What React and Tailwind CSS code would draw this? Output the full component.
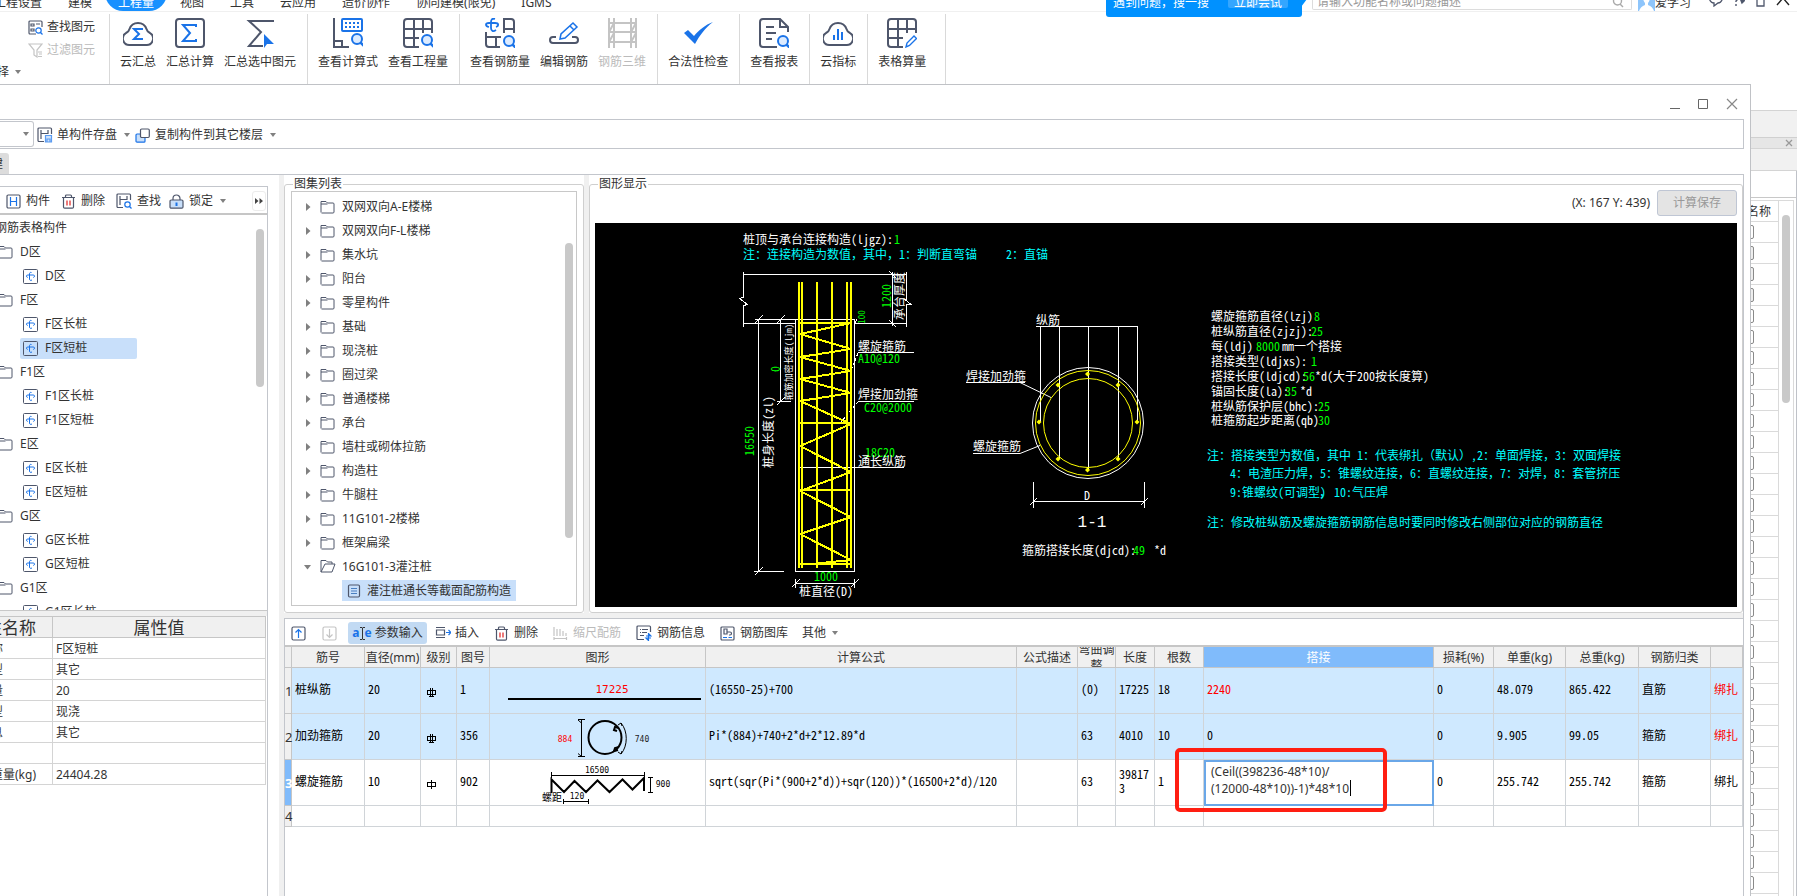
import React from "react";

const INK = "#4e566b";
const BLUE = "#1a73e8";

/* ---------- shared helpers ---------- */

function Icon({ size = 16, children, className = "" }) {
  return (
    <svg
      width={size}
      height={size}
      viewBox={`0 0 ${size} ${size}`}
      fill="none"
      stroke={INK}
      strokeWidth={size > 20 ? 2 : 1.2}
      aria-hidden="true"
      className={"shrink-0 " + className}
    >
      {children}
    </svg>
  );
}

function Caret({ className = "" }) {
  return (
    <svg width="6" height="4" viewBox="0 0 6 4" aria-hidden="true" className={"shrink-0 " + className}>
      <path d="M0 0h6L3 4z" fill="#808080" />
    </svg>
  );
}

/* ---------- title tabs ---------- */

const menuTabs = ["工程设置", "建模", "工程量", "视图", "工具", "云应用", "造价协作", "协同建模(限免)", "IGMS"];

function MenuBar() {
  return (
    <header className="relative z-10 flex h-3 shrink-0 items-end border-b border-[#f0f0f0] bg-white">
      <nav className="-ml-[19px] flex">
        {menuTabs.map((t) => (
          <button
            key={t}
            className={
              "h-[18px] whitespace-nowrap px-[13px] leading-5 " +
              (t === "工程量" ? "rounded-b-full rounded-t-none bg-[#1890ff] text-white" : "")
            }
          >
            {t}
          </button>
        ))}
      </nav>
      <div className="ml-auto flex items-end">
        <div className="relative mr-2.5 h-3 w-[196px]">
          <div className="absolute bottom-[-6px] left-0 flex h-[26px] w-full items-start rounded-b-[3px] bg-[#0091ff] pl-[7px] pr-3.5 text-white">
            <span className="pt-0.5 leading-5">遇到问题，搜一搜</span>
            <button className="ml-auto h-[17px] rounded-[2px] bg-[#34a6ff] px-1.5 leading-6">立即尝试</button>
            <svg width="6" height="16" viewBox="0 0 6 16" className="absolute -right-[5px] top-0" aria-hidden="true">
              <path d="M0 0h6v8L0 16z" fill="#0091ff" />
            </svg>
          </div>
        </div>
        <label className="relative mb-px block w-[320px]">
          <input
            aria-label="搜索"
            placeholder="请输入功能名称或问题描述"
            className="block h-[18px] w-full rounded-b-[2px] border border-t-0 border-[#dcdcdc] px-1 pt-0.5 leading-4 outline-none placeholder:text-[#999]"
          />
          <svg width="12" height="12" viewBox="0 0 12 12" className="absolute bottom-0.5 right-2" fill="none" stroke="#aaa" strokeWidth="1.4" aria-hidden="true">
            <circle cx="5.5" cy="5" r="4" />
            <path d="M8 8l3 3" />
          </svg>
        </label>
        <svg width="17" height="14" viewBox="0 0 17 14" className="ml-1.5" aria-hidden="true">
          <path d="M0 0h17v14H0z" fill="#8ec5fb" />
          <path d="M5 0h7c0 3-1 5-2 6v2c3 1 5 3 6 6H1c1-3 3-5 6-6V6C6 5 5 3 5 0z" fill="#fff" />
        </svg>
        <span className="h-[18px] leading-5">爱学习</span>
        <div className="mb-1 ml-4 mr-[7px] flex items-end gap-[9px]">
          <svg width="17" height="15" viewBox="0 0 17 15" fill="none" stroke={INK} strokeWidth="1.3" aria-hidden="true">
            <path d="M2 0c-1 6 1 11 5 11v3l4-3c3 0 5-4 5-10M6 5v1M8.500 5v1M11 5v1" />
          </svg>
          <svg width="12" height="15" viewBox="0 0 12 15" fill="none" stroke={INK} strokeWidth="1.4" aria-hidden="true">
            <path d="M2 4c1-3 5-3 5 1l-4 4v1M3 12v2" />
            <path d="M7 6l5 2-3 3z" fill={INK} />
          </svg>
          <svg width="13" height="15" viewBox="0 0 13 15" fill="none" stroke={INK} strokeWidth="1.3" aria-hidden="true">
            <path d="M0 7h3v7h7V7h3L8 3H5z" />
          </svg>
          <svg width="14" height="15" viewBox="0 0 14 15" fill="none" stroke="#222" strokeWidth="1.4" aria-hidden="true">
            <path d="M1 13l6-7 6 7" />
          </svg>
        </div>
      </div>
    </header>
  );
}

/* ---------- ribbon ---------- */

const magnifier = (x, y) => (
  <g stroke={BLUE}>
    <circle cx={x} cy={y} r="5" fill="#dcebff" />
    <path d={`M${x + 3.500} ${y + 3.500}L${x + 7} ${y + 7}`} strokeWidth="2.500" />
  </g>
);

const ribbonIcons = {
  cloudSum: (
    <Icon size={30}>
      <path d="M7 27h16a6.500 6.500 0 0 0 4-12c-2-1-3-2-3.500-4a9 9 0 0 0-17 0C6 13 5 14 3 15a6.500 6.500 0 0 0 4 12z" />
      <path d="M20 11h-9l5 5-5 5h9" stroke={BLUE} />
    </Icon>
  ),
  sum: (
    <Icon size={30}>
      <rect x="1" y="1" width="28" height="28" rx="3" />
      <path d="M21 9V7H8l7 8-7 8h13v-2" stroke={BLUE} />
    </Icon>
  ),
  sumSelected: (
    <Icon size={30}>
      <path d="M29 3H4l12 11L4 28h14" />
      <path d="M19 16v14l3-4h7z" fill={BLUE} stroke="none" />
    </Icon>
  ),
  formula: (
    <Icon size={30}>
      <path d="M1 0v29h15M1 23h8v6" />
      <rect x="9" y="1" width="20" height="12" rx="1" stroke={BLUE} />
      <path d="M12 5h15M12 9h15" stroke={BLUE} strokeDasharray="2 2" />
      {magnifier(24, 21)}
    </Icon>
  ),
  quantity: (
    <Icon size={30}>
      <path d="M16 29H4a3 3 0 0 1-3-3V4a3 3 0 0 1 3-3h22a3 3 0 0 1 3 3v11M1 11h28M1 20h15M11 1v28M20 1v14" />
      {magnifier(24, 22)}
    </Icon>
  ),
  rebarQty: (
    <Icon size={30}>
      <path d="M1 14v12a3 3 0 0 0 3 3h11M1 19h15M11 19v10M19 15V1h7a3 3 0 0 1 3 3v11M19 11h10" />
      <path d="M10 1C7 0 6 2 6 4v6c0 3 2 4 5 2M4 9C0 8 0 5 4 5h6c4 0 4 3 1 4" stroke={BLUE} strokeWidth="1.800" />
      {magnifier(24, 23)}
    </Icon>
  ),
  editRebar: (
    <Icon size={30}>
      <path d="M7 19H4a3 3 0 0 0 0 6h22a3 3 0 0 0 0-6h-3" />
      <path d="M11 21l1-5L24 5l4 4-12 11z M21 8l4 4" stroke={BLUE} strokeWidth="1.500" />
    </Icon>
  ),
  rebar3d: (
    <Icon size={30}>
      <path d="M2 0v30M7 0v30M24 0v30M29 0v30M2 5h27M2 14h27M2 24h27M7 5l-5 9M29 5l-5 9M7 15l-5 9M29 15l-5 9" stroke="#c4c4c4" />
    </Icon>
  ),
  check: (
    <Icon size={30}>
      <path d="M1 15l4-3 6 6C16 12 22 7 30 4 22 10 17 17 12 26z" fill={BLUE} stroke="none" />
    </Icon>
  ),
  report: (
    <Icon size={30}>
      <path d="M18 29H4a3 3 0 0 1-3-3V4a3 3 0 0 1 3-3h17l8 8v5M21 1v8h8M7 9h8M7 15h10M7 21h6" />
      {magnifier(24, 23)}
    </Icon>
  ),
  cloudIndex: (
    <Icon size={30}>
      <path d="M7 27h16a6.500 6.500 0 0 0 4-12c-2-1-3-2-3.500-4a9 9 0 0 0-17 0C6 13 5 14 3 15a6.500 6.500 0 0 0 4 12z" />
      <path d="M11 17v5M15 11v11M19 14v8" stroke={BLUE} />
    </Icon>
  ),
  tableCalc: (
    <Icon size={30}>
      <path d="M16 29H4a3 3 0 0 1-3-3V4a3 3 0 0 1 3-3h22a3 3 0 0 1 3 3v11M1 11h28M1 20h15M11 1v28M20 1v14" />
      <path d="M19 29l1-4 7-7 2.500 2.500-7 7z" stroke={BLUE} strokeWidth="1.400" />
    </Icon>
  ),
};

const ribbonGroups = [
  [["云汇总", "cloudSum"], ["汇总计算", "sum"], ["汇总选中图元", "sumSelected"]],
  [["查看计算式", "formula"], ["查看工程量", "quantity"]],
  [["查看钢筋量", "rebarQty"], ["编辑钢筋", "editRebar"], ["钢筋三维", "rebar3d"]],
  [["合法性检查", "check"]],
  [["查看报表", "report"]],
  [["云指标", "cloudIndex"]],
  [["表格算量", "tableCalc"]],
];

function Ribbon() {
  return (
    <div className="flex h-[72px] shrink-0 bg-white pt-0.5">
      <div className="w-[109px] shrink-0">
        <button className="ml-7 mt-1 flex items-center gap-1">
          <Icon size={15}>
            <path d="M8 14H2a1 1 0 0 1-1-1V2a1 1 0 0 1 1-1h11a1 1 0 0 1 1 1v5M3 4h3v2H3zM3 9h3v2H3zM8 4h4" />
            <g stroke={BLUE}>
              <circle cx="10.500" cy="10.500" r="2.700" />
              <path d="M12.500 12.500l2 2" />
            </g>
          </Icon>
          <span className="leading-[18px]">查找图元</span>
        </button>
        <button disabled className="ml-7 mt-[5px] flex items-center gap-1 text-[#bbb]">
          <Icon size={15}>
            <path d="M1 1h13l-5 6v7l-3-2V7zM10 9h4M11 11h3M10 13.500h4" stroke="#c4c4c4" />
          </Icon>
          <span className="leading-[18px]">过滤图元</span>
        </button>
        <button className="-ml-[15px] mt-1 flex items-center gap-1.5">
          <span className="leading-[18px]">选择</span>
          <Caret />
        </button>
      </div>
      <div className="w-px bg-[#d9d9d9]" />
      {ribbonGroups.map((g, i) => (
        <div
          key={i}
          className={
            "flex gap-2.5 border-r border-[#d9d9d9] pl-2.5 " + (i === ribbonGroups.length - 1 ? "pr-[19px]" : "pr-[11px]")
          }
        >
          {g.map(([label, icon]) => (
            <button
              key={label}
              disabled={icon === "rebar3d"}
              className="flex flex-col items-center gap-1.5 self-start whitespace-nowrap pt-1 leading-4 disabled:text-[#bbb]"
            >
              {ribbonIcons[icon]}
              <span>{label}</span>
            </button>
          ))}
        </div>
      ))}
    </div>
  );
}

/* ---------- small toolbar icons ---------- */

const trash = (
  <Icon size={15}>
    <path d="M1 3.500h13M4.500 3.500V2a1 1 0 0 1 1-1h4a1 1 0 0 1 1 1v1.500M2.500 3.500V13a1.200 1.200 0 0 0 1.200 1.200h7.600A1.200 1.200 0 0 0 12.500 13V3.500" />
    <path d="M6 6.500v5M9 6.500v5" stroke="#e02020" />
  </Icon>
);

const component = (
  <Icon size={15}>
    <rect x="1" y="1" width="13" height="13" rx="1.200" />
    <path d="M4.500 3v9M10.500 3v9M4.500 7.500h6" stroke={BLUE} />
  </Icon>
);

const findComponent = (
  <Icon size={16}>
    <path d="M7 14.500H2a1 1 0 0 1-1-1V2a1 1 0 0 1 1-1h11.500a1 1 0 0 1 1 1v5M4 3v9M4 6.500h7M11 3v4" />
    <g stroke={BLUE}>
      <circle cx="11.500" cy="11.500" r="2.700" />
      <path d="M13.500 13.500l2 2" />
    </g>
  </Icon>
);

const lock = (
  <Icon size={15}>
    <path d="M4 6V4.500a3.500 3.500 0 0 1 7 0V6" />
    <rect x="1" y="6" width="13" height="8.200" rx="1.200" fill="#c8dffa" />
    <path d="M7.500 8.500v3.500" stroke={BLUE} strokeWidth="2" />
  </Icon>
);

const saveDisk = (
  <Icon size={16}>
    <path d="M7 14.500H2a1 1 0 0 1-1-1V2a1 1 0 0 1 1-1h11.500a1 1 0 0 1 1 1v5M4 3v9M4 6.500h7M11 3v4" />
    <path d="M8.500 8.500h6v6.500h-6zM10 12h3v3h-3z" stroke="#5b9bf0" fill="#cfe2fb" />
  </Icon>
);

const copy = (
  <Icon size={15}>
    <rect x="1" y="6" width="9" height="8.200" rx="1" fill="#c8dffa" stroke={BLUE} />
    <rect x="5.500" y="1" width="8.800" height="8.500" rx="1.200" fill="#fff" />
  </Icon>
);

const rebarNode = (
  <Icon size={15}>
    <rect x=".5" y=".5" width="14" height="14" rx="1" strokeWidth="1" />
    <path d="M8.500 3.500C7 3 6.500 4 6.500 5v5c0 1.300 1 1.800 2.500 1M4.700 8.500C3 8 3 6 4.800 6h5.400c1.800 0 1.800 2 .1 2.500" stroke={BLUE} strokeWidth="1" />
  </Icon>
);

const folder = (
  <Icon size={15}>
    <path d="M1 12.500v-11h5L7.500 3H13a1 1 0 0 1 1 1v8a1 1 0 0 1-1 1H1.500M1 4h6.500" strokeWidth="1" />
  </Icon>
);

const folderOpen = (
  <Icon size={16}>
    <path d="M1 13V1.500h5L7.500 3H12v2M1 13l4-8h10l-3 8z" strokeWidth="1" />
  </Icon>
);

const sheet = (
  <Icon size={14}>
    <rect x="1.500" y="1" width="11" height="12" rx="1.200" />
    <path d="M4 4.500h6M4 7h6M4 9.500h6" stroke="#4a7fc0" />
  </Icon>
);

/* ---------- left column ---------- */

const componentTree = [
  ["D区", ["D区"]],
  ["F区", ["F区长桩", "F区短桩"]],
  ["F1区", ["F1区长桩", "F1区短桩"]],
  ["E区", ["E区长桩", "E区短桩"]],
  ["G区", ["G区长桩", "G区短桩"]],
  ["G1区", ["G1区长桩"]],
];

const properties = [
  ["构件名称", "F区短桩"],
  ["构件类型", "其它"],
  ["构件数量", "20"],
  ["预制类型", "现浇"],
  ["汇总信息", "其它"],
  ["备注", ""],
  ["构件总重量(kg)", "24404.28"],
];

function LeftColumn() {
  return (
    <aside className="mr-[11px] mt-[11px] flex w-[268px] shrink-0 flex-col border-r border-t border-[#c3c6cc]">
      <div className="flex h-7 shrink-0 items-center border-b-2 border-[#c6c6c6] pl-1.5 pt-0.5">
        <button className="flex items-center gap-[5px]">{component}构件</button>
        <button className="ml-[11px] flex items-center gap-[5px]">{trash}删除</button>
        <button className="ml-[11px] flex items-center gap-[5px]">{findComponent}查找</button>
        <button className="ml-[8px] flex items-center gap-[5px]">
          {lock}锁定
          <Caret className="ml-0.5" />
        </button>
        <button aria-label="更多" className="ml-auto mr-[1px] flex h-5 w-3.5 items-center justify-center rounded-[3px] border border-[#ececec]">
          <svg width="8" height="6" viewBox="0 0 8 6" aria-hidden="true">
            <path d="M0 0l3.500 3L0 6zM4.500 0L8 3 4.500 6z" fill="#444" />
          </svg>
        </button>
      </div>

      <div className="relative h-[396px] shrink-0 overflow-hidden border-b border-[#c8c8c8] pt-px">
        <p className="-ml-[5px] h-6 leading-6">钢筋表格构件</p>
        <ul>
          {componentTree.map(([name, kids]) => (
            <li key={name}>
              <div className="-ml-0.5 flex h-6 items-center gap-[7px]">
                {folder}
                {name}
              </div>
              <ul>
                {kids.map((k) => (
                  <li key={k} className="flex h-6 items-center">
                    <button
                      className={
                        "ml-5 flex h-[21px] w-[117px] items-center gap-[7px] rounded-[2px] pl-[3px] " +
                        (k === "F区短桩" ? "bg-[#c8dffa]" : "")
                      }
                    >
                      {rebarNode}
                      {k}
                    </button>
                  </li>
                ))}
              </ul>
            </li>
          ))}
        </ul>
        <div className="absolute right-[3px] top-3.5 h-[158px] w-2 rounded-full bg-[#c9c9c9]" />
      </div>

      <div className="h-[5px] shrink-0 bg-[#f0f0f0]" />
      <div className="overflow-hidden pr-px">
        <table className="-ml-12 w-[calc(100%+48px)] table-fixed border-separate border-spacing-0 border-t border-[#c6c6c6]">
          <colgroup>
            <col className="w-[101px]" />
            <col />
          </colgroup>
          <thead>
            <tr className="h-[21px] bg-[#f0f0f0] text-[17px]">
              <th className="border-b border-r border-[#c6c6c6] p-0 pt-0.5 font-normal leading-[18px]">属性名称</th>
              <th className="border-b border-r border-[#c6c6c6] p-0 pt-0.5 font-normal leading-[18px]">属性值</th>
            </tr>
          </thead>
          <tbody>
            {properties.map(([k, v]) => (
              <tr key={k} className="h-[21px]">
                <td className="whitespace-nowrap border-b border-r border-[#d4d4d4] p-0 pl-[3px] pt-0.5">{k}</td>
                <td className="border-b border-r border-[#d4d4d4] p-0 pl-[3px] pt-0.5">{v}</td>
              </tr>
            ))}
          </tbody>
        </table>
      </div>
    </aside>
  );
}

/* ---------- atlas list ---------- */

const atlas = [
  "双网双向A-E楼梯", "双网双向F-L楼梯", "集水坑", "阳台", "零星构件", "基础", "现浇桩", "圈过梁",
  "普通楼梯", "承台", "墙柱或砌体拉筋", "构造柱", "牛腿柱", "11G101-2楼梯", "框架扁梁",
];

function GroupBox({ title, className, children }) {
  return (
    <section className={"bg-white pt-[9px] " + className}>
      <div className="relative flex h-[429px] flex-col rounded-[3px] border border-[#cfcfcf]">
        <h2 className="absolute -top-[9px] left-2 bg-white px-px leading-4">{title}</h2>
        {children}
      </div>
    </section>
  );
}

function AtlasList() {
  return (
    <GroupBox title="图集列表" className="w-[300px] shrink-0">
      <div className="relative m-1.5 flex-1 border border-[#c8c8c8] pt-[3px]">
        <ul>
          {atlas.map((a) => (
            <li key={a} className="flex h-6 items-center pl-3.5">
              <svg width="5" height="8" viewBox="0 0 5 8" aria-hidden="true">
                <path d="M0 0l4.500 4L0 8z" fill="#808080" />
              </svg>
              <span className="ml-[9px] mr-[7px]">{folder}</span>
              {a}
            </li>
          ))}
          <li>
            <div className="flex h-6 items-center pl-3">
              <svg width="8" height="5" viewBox="0 0 8 5" aria-hidden="true">
                <path d="M0 0h7L3.500 4.500z" fill="#808080" />
              </svg>
              <span className="ml-2 mr-1.5">{folderOpen}</span>
              16G101-3灌注桩
            </div>
            <button className="ml-[50px] mt-px flex h-[21px] items-center gap-1.5 bg-[#c8dffa] px-[5px]">
              {sheet}
              灌注桩通长等截面配筋构造
            </button>
          </li>
        </ul>
        <div className="absolute right-[3px] top-[51px] h-[295px] w-2 rounded-full bg-[#c9c9c9]" />
      </div>
    </GroupBox>
  );
}

/* ---------- drawing ---------- */

const W = "#ffffff";
const G = "#00ff00";
const C = "#00ffff";
const Y = "#ffff00";

/* Latin runs use the font's half-width glyphs, Chinese runs and their punctuation stay full width */
function T({ x, y, c = W, s = 12, anchor = "start", rot, children }) {
  return (
    <text
      x={x}
      y={y + s / 3}
      fill={c}
      fontSize={s}
      textAnchor={anchor}
      transform={rot ? `rotate(-90 ${x} ${y})` : undefined}
    >
      {children.match(/[\x20-\x7e]+|[^\x20-\x7e]+/g).map((run, i) => (
        <tspan key={i} className={/^[\x20-\x7e]/.test(run) ? "[font-feature-settings:'hwid']" : undefined}>
          {run}
        </tspan>
      ))}
    </text>
  );
}

const parameters = [
  [317, "螺旋箍筋直径(lzj)", 1314, "8"],
  [332, "桩纵筋直径(zjzj):", 1311, "25"],
  [347, "每(ldj)", 1256, "8000", 1282, "mm一个搭接"],
  [362, "搭接类型(ldjxs):", 1311, "1"],
  [377, "搭接长度(ldjcd):", 1303, "56", 1315, "*d(大于200按长度算)"],
  [392, "锚固长度(la):", 1285, "35", 1300, "*d"],
  [407, "桩纵筋保护层(bhc):", 1318, "25"],
  [421, "桩箍筋起步距离(qb)", 1318, "30"],
];

function Drawing() {
  return (
    <svg
      width="1142"
      height="384"
      viewBox="595 223 1142 384"
      fill="none"
      role="img"
      aria-label="灌注桩通长等截面配筋构造"
      className="font-['Noto_Sans_CJK_SC',sans-serif]"
    >
      <T x={743} y={240}>桩顶与承台连接构造(ljgz):</T>
      <T x={894} y={240} c={G}>1</T>
      <T x={743} y={255} c={C}>注：连接构造为数值，其中，1：判断直弯锚</T>
      <T x={1006} y={255} c={C}>2：直锚</T>

      <g stroke={W} strokeWidth="1" shapeRendering="crispEdges">
        <path d="M743.500 272v25l-4 1.500 8 6-4 1v21M743.500 274.500h163M906.500 272v27h-2l6 5h-4v23M743.500 323.500h52M855 323.500h52" />
        <path d="M892.500 272v54M889 271l7 7M889 320l7 7" />
        <path d="M795.500 319.500h59v252h-59zM855 323l2-4" />
        <path d="M758.500 319v252M755 319.500h40M754 571.500h30M755 323l8-8M755 575l8-8M780.500 319v82M777 401.500h14M777 323l8-8M777 405l8-8" />
        <path d="M795 583.500h60M795.500 579v9M854.500 579v9M792 587l8-8M851 587l8-8" />
        <path d="M858 352.500h56M858 401.500h56M798 467.500h106" />
        <path d="M858 353l-7 18M858 402l-18 21" strokeDasharray="3 2" />
      </g>

      <g stroke={Y} strokeWidth="2" shapeRendering="crispEdges">
        <path d="M799 282v286M802 282v286M817 282v286M832 282v286M847 282v286M851 282v286" />
        <path d="M800 323h51M800 423h51M800 490h51M800 564h51" />
        <path d="M851 323l-51 11 51 15-51 8 51 14-51 8 51 14-51 8 51 23-51 22 51 26-51 19 51 26-51 17 51 26-40 4" strokeLinejoin="round" />
      </g>

      <T x={887} y={296} c={G} rot anchor="middle">1200</T>
      <T x={900} y={296} rot anchor="middle">承台厚度</T>
      <T x={862} y={317} c={G} s={9} rot anchor="middle">100</T>
      <T x={776} y={369} c={G} rot anchor="middle">0</T>
      <T x={789} y={362} s={9} rot anchor="middle">箍筋加密长度(ljm)</T>
      <T x={769} y={432} rot anchor="middle">桩身长度(zl)</T>
      <T x={750} y={441} c={G} rot anchor="middle">16550</T>

      <T x={858} y={347}>螺旋箍筋</T>
      <T x={858} y={359} c={G}>A10@120</T>
      <T x={858} y={395}>焊接加劲箍</T>
      <T x={864} y={408} c={G}>C20@2000</T>
      <T x={865} y={453} c={G}>18C20</T>
      <T x={858} y={462}>通长纵筋</T>
      <T x={826} y={577} c={G} anchor="middle">1000</T>
      <T x={799} y={592}>桩直径(D)</T>

      <T x={1036} y={321}>纵筋</T>
      <g stroke={W} strokeWidth="1">
        <g shapeRendering="crispEdges">
          <path d="M1036 326.500h101M1040.500 326v96M1059.500 326v133M1088.500 326v144M1118.500 326v133M1137.500 326v96" />
          <path d="M966 382.500h59M973 453.500h47" />
          <path d="M1033.500 482v26M1144.500 482v26M1033 501.500h111M1030 505l7-7M1141 505l7-7" />
        </g>
        <path d="M1020 382.500l31 15M1020 453.500l20-8" />
        <circle cx="1088" cy="423" r="55.500" />
      </g>
      <circle cx="1088" cy="423" r="52.500" stroke={Y} />
      <circle cx="1088" cy="423" r="44.500" stroke={Y} />
      <g fill={Y}>
        {[[1039, 422], [1058, 385], [1087.5, 374], [1118, 385], [1137, 422], [1118, 459], [1087.5, 470], [1058, 459]].map(([x, y]) => (
          <path key={`${x}-${y}`} d={`M${x - 2.5} ${y}l2.500-2.500 2.500 2.500-2.500 2.500z`} />
        ))}
      </g>
      <T x={966} y={377}>焊接加劲箍</T>
      <T x={973} y={447}>螺旋箍筋</T>
      <T x={1087} y={496} anchor="middle">D</T>
      <text x="1092" y="527" fill={W} fontSize="16" textAnchor="middle" className="font-['Liberation_Mono',monospace]">
        1-1
      </text>
      <T x={1022} y={551}>箍筋搭接长度(djcd):</T>
      <T x={1133} y={551} c={G}>49</T>
      <T x={1154} y={551}>*d</T>

      {parameters.map(([y, label, vx, v, sx, suffix]) => (
        <g key={label}>
          <T x={1211} y={y}>{label}</T>
          <T x={vx} y={y} c={G}>{v}</T>
          {suffix && <T x={sx} y={y}>{suffix}</T>}
        </g>
      ))}

      <T x={1207} y={456} c={C}>注：搭接类型为数值，其中 1：代表绑扎（默认）,2：单面焊接，3：双面焊接</T>
      <T x={1230} y={474} c={C}>4：电渣压力焊，5：锥螺纹连接，6：直螺纹连接，7：对焊，8：套管挤压</T>
      <T x={1230} y={493} c={C}>9:锥螺纹(可调型)</T>
      <T x={1319} y={493} c={C}>，</T>
      <T x={1334} y={493} c={C}>10:气压焊</T>
      <T x={1207} y={523} c={C}>注：修改桩纵筋及螺旋箍筋钢筋信息时要同时修改右侧部位对应的钢筋直径</T>
    </svg>
  );
}

/* ---------- rebar table ---------- */

function Grade({ plain }) {
  return (
    <svg
      width="11"
      height="11"
      viewBox="0 0 11 11"
      fill="none"
      stroke="#000"
      strokeWidth="1"
      shapeRendering="crispEdges"
      aria-label="级别"
      className="ml-0.5 mt-1"
    >
      {plain ? <path d="M1.500 3.500h8v4h-8zM5.500 1v9" /> : <path d="M1.500 3.500h8v4h-8zM4.500 1v9M6.500 1v9M3 9.500h5" />}
    </svg>
  );
}

function DimText({ x, y, c = "#000", s = 9, children }) {
  return (
    <text x={x} y={y + s / 3} fill={c} stroke="none" fontSize={s} textAnchor="middle" className="font-['DejaVu_Sans_Mono','Noto_Sans_CJK_SC',monospace]">
      {children}
    </text>
  );
}

const shapes = [
  <svg width="215" height="45" viewBox="0 0 215 45" aria-label="直筋">
    <DimText x={122} y={21} c="#f00" s={11}>17225</DimText>
    <path d="M18 31h193" stroke="#000" strokeWidth="2" />
  </svg>,
  <svg width="215" height="45" viewBox="0 0 215 45" fill="none" stroke="#000" aria-label="圆形箍筋">
    <DimText x={75} y={25} c="#f00" s={8}>884</DimText>
    <DimText x={152} y={25} c="#222" s={8}>740</DimText>
    <path d="M91.500 5v38M88 6l3.500 3M95 5.500h-7M88 42.500h7M88 39.500l3.500 3" />
    <circle cx="115" cy="23.500" r="16.500" strokeWidth="2" />
    <path d="M131 9c7 8 7 23 0 31M128 11l3-2 1 3M128 38l3 2 1-3" />
    <path d="M129 14l-4-1-1 3 3 1M129 33l-4 1-1 3 4-1" strokeWidth="2" />
  </svg>,
  <svg width="215" height="45" viewBox="0 0 215 45" fill="none" stroke="#000" aria-label="螺旋箍筋">
    <DimText x={107} y={10} s={8}>16500</DimText>
    <DimText x={173} y={24} s={8}>900</DimText>
    <DimText x={62} y={38} s={10}>螺距</DimText>
    <DimText x={87} y={36} s={8}>120</DimText>
    <path d="M61.500 33V19.500L74 32l10.500-11L96 32l11.500-11.500L119.500 32l13-12.500 10 10L154 18v13" strokeWidth="2" />
    <path d="M61 15.500h93M61.500 12v6M154.500 12v6M160.500 18v14M158 17.500h5M158 32.500h5M73 41.500h26M73.500 39v5M98.500 39v5" />
  </svg>,
];

const columns = [
  ["", "w-[7px]"], ["筋号", "w-[73px]"], ["直径(mm)", "w-[56px]"], ["级别", "w-[36px]"], ["图号", "w-[33px]"],
  ["图形", "w-[216px]"], ["计算公式", ""], ["公式描述", "w-[61px]"], ["弯曲调整", "w-[38px]"], ["长度", "w-[39px]"],
  ["根数", "w-[49px]"], ["搭接", "w-[230px]"], ["损耗(%)", "w-[60px]"], ["单重(kg)", "w-[72px]"],
  ["总重(kg)", "w-[73px]"], ["钢筋归类", "w-[72px]"], ["", "w-[32px]"],
];

const rows = [
  ["桩纵筋", "20", "grade", "1", "shape", "(16550-25)+700", "", "(0)", "17225", "18", "2240", "0", "48.079", "865.422", "直筋", "绑扎"],
  ["加劲箍筋", "20", "grade", "356", "shape", "Pi*(884)+740+2*d+2*12.89*d", "", "63", "4010", "10", "0", "0", "9.905", "99.05", "箍筋", "绑扎"],
  ["螺旋箍筋", "10", "plain", "902", "shape", "sqrt(sqr(Pi*(900+2*d))+sqr(120))*(16500+2*d)/120", "", "63", "398173", "1", "edit", "0", "255.742", "255.742", "箍筋", "绑扎"],
];

const cell = "border-b border-r border-[#d0d4d8] p-0";

function RebarTable() {
  return (
    <table className="w-full table-fixed border-separate border-spacing-0">
      <colgroup>
        {columns.map(([, w], i) => (
          <col key={i} className={w} />
        ))}
      </colgroup>
      <thead>
        <tr className="h-[21px] bg-[#f0f0f0]">
          {columns.map(([name], i) => (
            <th
              key={i}
              className={
                "border-b border-r border-[#c6c6c6] p-0 font-normal " + (name === "搭接" ? "bg-[#80bbfb] font-bold text-white" : "")
              }
            >
              <div
                className={
                  "flex h-5 items-center justify-center overflow-hidden pt-0.5 " +
                  (name === "弯曲调整" ? "break-all" : "whitespace-nowrap")
                }
              >
                {name}
              </div>
            </th>
          ))}
        </tr>
      </thead>
      <tbody className="text-black">
        {rows.map((r, ri) => (
          <tr key={ri} className={"h-[46px] " + (ri < 2 ? "bg-[#cfe9ff]" : "")}>
            <th
              className={
                "border-b border-r border-[#c6c6c6] p-0 text-[13px] " +
                (ri === 2 ? "bg-[#80bbfb] font-bold text-white" : "bg-[#f0f0f0] font-normal text-[#333]")
              }
            >
              {ri + 1}
            </th>
            {r.map((v, ci) => {
              if (v === "edit")
                return (
                  <td key={ci} className="relative p-0 align-top">
                    <textarea
                      aria-label="搭接"
                      spellCheck={false}
                      defaultValue={"(Ceil((398236-48*10)/\n(12000-48*10))-1)*48*10"}
                      className="block h-[46px] w-full resize-none overflow-hidden border-2 border-[#6aa7e8] bg-white px-[5px] pt-px leading-[17px] text-[#333] outline-none"
                    />
                    <span className="absolute left-[146px] top-5 h-4 w-px bg-black" />
                    <span className="pointer-events-none absolute -left-[29px] -top-3 z-10 h-16 w-[212px] rounded-[5px] border-4 border-[#ff1e12]" />
                  </td>
                );
              if (v === "shape")
                return (
                  <td key={ci} className={cell}>
                    {shapes[ri]}
                  </td>
                );
              if (v === "grade" || v === "plain")
                return (
                  <td key={ci} className={cell + " pl-[3px]"}>
                    <Grade plain={v === "plain"} />
                  </td>
                );
              const red = ri < 2 && (v === "绑扎" || v === "2240");
              return (
                <td
                  key={ci}
                  className={
                    cell +
                    " break-all pb-1 pl-[3px] font-['Noto_Sans_CJK_SC',sans-serif] leading-[14px] [font-feature-settings:'hwid'] " +
                    (red ? "text-[#ff0000]" : "")
                  }
                >
                  {v}
                </td>
              );
            })}
          </tr>
        ))}
        <tr className="h-[21px]">
          <th className="border-b border-r border-[#c6c6c6] bg-[#f0f0f0] p-0 text-[13px] font-normal leading-4 text-[#333]">4</th>
          {columns.slice(1).map((_, i) => (
            <td key={i} className={cell} />
          ))}
        </tr>
      </tbody>
    </table>
  );
}

function RebarToolbar() {
  return (
    <div className="flex h-7 items-center border-b-2 border-[#c6c6c6] pl-1.5 pt-0.5">
      <button aria-label="上移">
        <Icon size={15}>
          <rect x="1" y="1" width="13" height="13" rx="1.500" />
          <path d="M7.500 12V3.500M4.500 6.500l3-3 3 3" stroke={BLUE} />
        </Icon>
      </button>
      <button aria-label="下移" disabled className="ml-4">
        <Icon size={15}>
          <rect x="1" y="1" width="13" height="13" rx="1.500" stroke="#c4c4c4" />
          <path d="M7.500 3v8.500M4.500 8.500l3 3 3-3" stroke="#c4c4c4" />
        </Icon>
      </button>
      <button className="ml-[11px] flex h-[22px] w-[79px] items-center justify-center gap-[3px] rounded-[3px] bg-[#c2daf3]">
        <span className="flex items-center font-bold leading-4 text-[#1a73e8]">
          a
          <svg width="5" height="13" viewBox="0 0 5 13" fill="none" stroke="#333" aria-hidden="true">
            <path d="M0 .5h2l.5.500.5-.5h2M2.500 1v11M0 12.500h2l.5-.5.5.500h2" />
          </svg>
          e
        </span>
        参数输入
      </button>
      <button className="ml-2 flex items-center gap-1">
        <Icon size={16}>
          <path d="M1 2.500h9M1 12.500h9M1.500 5h8v5h-8z" />
          <path d="M11 7.500h4.500M13.500 5l2.500 2.500-2.500 2.500" stroke={BLUE} />
        </Icon>
        插入
      </button>
      <button className="ml-[15px] flex items-center gap-[5px]">{trash}删除</button>
      <button disabled className="ml-[15px] flex items-center gap-[5px] text-[#bbb]">
        <Icon size={15}>
          <path d="M1 1v9M4 3v7M7 3v7M10 5v5M13 7v3M1 12.500h13M1 11v3M13.500 11v3" stroke="#c4c4c4" />
        </Icon>
        缩尺配筋
      </button>
      <button className="ml-[15px] flex items-center gap-[5px]">
        <Icon size={16}>
          <path d="M8 14.500H2a1 1 0 0 1-1-1V2a1 1 0 0 1 1-1h11.500a1 1 0 0 1 1 1v5M4 4.500h1M6 4.500h6M4 7.500h1M6 7.500h5M4 10.500h4" />
          <path d="M10 11h5l-2-2M15 13h-5l2 2M12.500 8v8" stroke={BLUE} />
        </Icon>
        钢筋信息
      </button>
      <button className="ml-[15px] flex items-center gap-[5px]">
        <Icon size={15}>
          <rect x="1" y="1" width="13" height="13" rx="1" />
          <path d="M4 3h3v5H4zM7 6h3c2 0 2 3 0 3H9" />
          <path d="M3 11.500h4M8.500 11.500H12" stroke={BLUE} />
        </Icon>
        钢筋图库
      </button>
      <button className="ml-3.5 flex items-center gap-1.5">
        其他
        <Caret />
      </button>
    </div>
  );
}

/* ---------- dialog ---------- */

function Dialog() {
  return (
    <main className="flex min-w-0 flex-1 flex-col border-r border-t border-[#c0c2c6] bg-white pr-1.5">
      <div className="flex h-[34px] shrink-0 items-center justify-end gap-[18px] pr-1.5 pt-1">
        <button aria-label="最小化">
          <svg width="10" height="10" viewBox="0 0 10 10" stroke="#666" aria-hidden="true">
            <path d="M0 9.500h10" />
          </svg>
        </button>
        <button aria-label="最大化">
          <svg width="10" height="10" viewBox="0 0 10 10" fill="none" stroke="#666" aria-hidden="true">
            <path d="M.5.500h9v9h-9z" />
          </svg>
        </button>
        <button aria-label="关闭">
          <svg width="12" height="12" viewBox="0 0 12 12" stroke="#888" strokeWidth="1.200" aria-hidden="true">
            <path d="M1 1l10 10M11 1L1 11" />
          </svg>
        </button>
      </div>

      <div className="flex h-[30px] shrink-0 items-center border-y border-r border-[#c3c6cc]">
        <select aria-label="楼层" className="h-[26px] w-[34px] appearance-none rounded-r-[3px] border border-l-0 border-[#c3c6cc] bg-white" />
        <Caret className="-ml-[11px]" />
        <button className="ml-2 flex items-center gap-1 pt-0.5">
          {saveDisk}
          <span>单构件存盘</span>
          <Caret className="ml-[3px]" />
        </button>
        <button className="ml-[5px] flex items-center gap-[5px] pt-0.5">
          {copy}
          <span>复制构件到其它楼层</span>
          <Caret className="ml-0.5" />
        </button>
      </div>

      <div className="flex h-[25px] shrink-0 items-end">
        <button className="flex h-[21px] w-[9px] items-center justify-end overflow-hidden rounded-tr-[3px] bg-[#dcdcdc] pr-1.5">建</button>
      </div>

      <div className="flex min-h-0 flex-1 border-r border-t border-[#c3c6cc]">
        <LeftColumn />
        <div className="w-[5px] shrink-0 bg-[#f0f0f0]" />
        <div className="flex min-w-0 flex-1 flex-col bg-[#f0f0f0]">
          <div className="flex shrink-0 gap-[5px]">
            <AtlasList />
            <GroupBox title="图形显示" className="min-w-0 flex-1">
              <div className="flex h-[38px] shrink-0 items-center justify-end gap-[7px] pb-0.5 pr-[5px]">
                <span>(X: 167 Y: 439)</span>
                <button disabled className="h-[26px] w-20 rounded-[3px] border border-[#bfc6d4] bg-[#e4e4e4] text-[#999]">
                  计算保存
                </button>
              </div>
              <div className="mx-[5px] flex-1 overflow-hidden bg-black">
                <Drawing />
              </div>
              <div className="h-[5px]" />
            </GroupBox>
          </div>
          <div className="mt-[5px] flex-1 border-l border-t border-[#c3c6cc] bg-white">
            <RebarToolbar />
            <RebarTable />
          </div>
        </div>
      </div>
    </main>
  );
}

/* ---------- docked panel behind the dialog ---------- */

function SidePanel() {
  return (
    <aside className="flex w-[46px] shrink-0 flex-col overflow-hidden pt-[26px]">
      <div className="h-[27px] shrink-0 border-t border-[#d4d4d4] bg-[#f1f1f1]" />
      <div className="flex h-[11px] shrink-0 items-center justify-end border-t border-[#d0d0d0] bg-[#e6e6e6] pr-1">
        <button aria-label="关闭面板">
          <svg width="8" height="8" viewBox="0 0 8 8" stroke="#999" strokeWidth="1.300" aria-hidden="true" className="block">
            <path d="M1 1l6 6M7 1L1 7" />
          </svg>
        </button>
      </div>
      <div className="h-[23px] shrink-0 border-y border-[#d4d4d4] bg-[#f1f1f1]" />
      <div className="flex min-h-0 flex-1 flex-col border-r border-[#bfc2c8]">
        <div className="h-[27px] shrink-0 border-b border-[#c8c8c8]" />
        <div className="mr-[2px] mt-0.5 flex min-h-0 flex-1 overflow-hidden border-r border-t border-[#dadada]">
          <table className="w-7 table-fixed border-separate border-spacing-0">
            <thead>
              <tr className="h-[21px]">
                <th className="border-b border-r border-[#dadada] p-0 font-normal">
                  <div className="-ml-1 whitespace-nowrap pt-0.5 text-left">名称</div>
                </th>
              </tr>
            </thead>
            <tbody>
              {Array.from({ length: 34 }, (_, i) => (
                <tr key={i} className="h-[21px]">
                  <td className="border-b border-r border-[#dadada] p-0">
                    <input
                      type="checkbox"
                      aria-label={`第${i + 1}行`}
                      className={
                        "-ml-[11px] block h-3.5 w-3.5 appearance-none rounded-[2px] border border-[#8a8a8a] " +
                        (i > 0 && i < 4 ? "bg-[#eee]" : "bg-white")
                      }
                    />
                  </td>
                </tr>
              ))}
            </tbody>
          </table>
          <div className="ml-[3px] mt-3.5 h-[188px] w-2 rounded-full bg-[#c9c9c9]" />
        </div>
      </div>
    </aside>
  );
}

export default function App() {
  return (
    <div className="flex h-screen flex-col overflow-hidden bg-white font-['Noto_Sans','Noto_Sans_CJK_SC',sans-serif] text-[12px] leading-4 text-[#333]">
      <MenuBar />
      <Ribbon />
      <div className="flex min-h-0 flex-1">
        <Dialog />
        <SidePanel />
      </div>
    </div>
  );
}
